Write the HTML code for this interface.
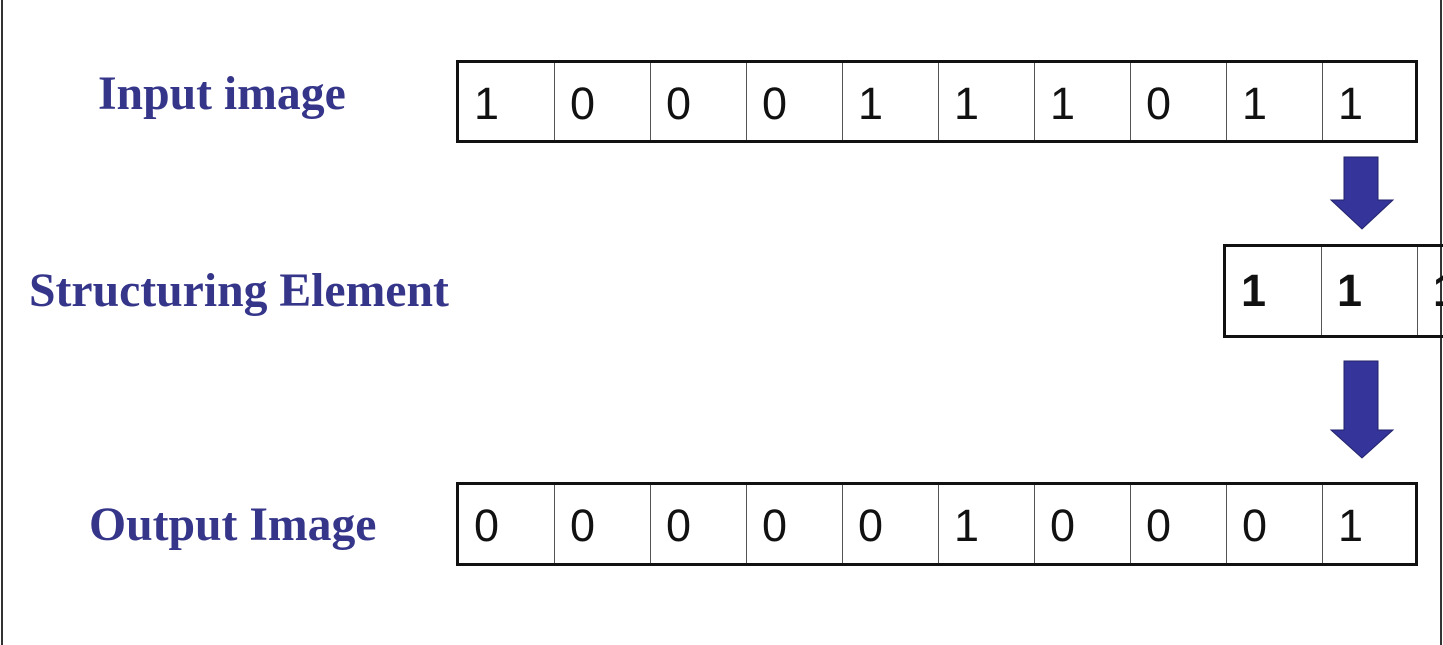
<!DOCTYPE html><html><head><style>
body{margin:0;width:1443px;height:645px;background:#fff;position:relative;overflow:hidden;font-family:"Liberation Sans",sans-serif}
.vl{position:absolute;top:0;height:645px;width:2px;background:#333}
.lbl{position:absolute;font-family:"Liberation Serif",serif;font-weight:bold;color:#35358a;font-size:47.7px;white-space:nowrap}
.box{position:absolute;border:3px solid #111;box-sizing:border-box;display:flex}
.c{width:96px;flex:none;border-right:1.5px solid #555;box-sizing:border-box;font-size:45px;line-height:82px;padding-left:15px;color:#111}
.c:last-child{border-right:none}
.b{font-weight:bold;line-height:88px}
</style></head><body>
<div class="vl" style="left:1px"></div>
<div class="vl" style="left:1440px"></div>
<div class="lbl" style="left:98px;top:66px">Input image</div>
<div class="lbl" style="left:29px;top:263px">Structuring Element</div>
<div class="lbl" style="left:89px;top:497px">Output Image</div>
<div class="box" style="left:456px;top:60px;width:962px;height:83px">
<div class="c">1</div><div class="c">0</div><div class="c">0</div><div class="c">0</div><div class="c">1</div><div class="c">1</div><div class="c">1</div><div class="c">0</div><div class="c">1</div><div class="c">1</div></div>
<div class="box" style="left:1223px;top:244px;width:230px;height:94px">
<div class="c b">1</div><div class="c b">1</div><div class="c b">1</div></div>
<div class="box" style="left:456px;top:482px;width:962px;height:84px">
<div class="c">0</div><div class="c">0</div><div class="c">0</div><div class="c">0</div><div class="c">0</div><div class="c">1</div><div class="c">0</div><div class="c">0</div><div class="c">0</div><div class="c">1</div></div>
<svg style="position:absolute;left:0;top:0" width="1443" height="645">
<polygon points="1344,157 1378,157 1378,200 1393,200 1362,229 1331,200 1344,200" fill="#34349a" stroke="#22226a" stroke-width="1"/>
<polygon points="1344,361 1378,361 1378,430 1393,430 1362,458 1331,430 1344,430" fill="#34349a" stroke="#22226a" stroke-width="1"/>
</svg>
</body></html>
